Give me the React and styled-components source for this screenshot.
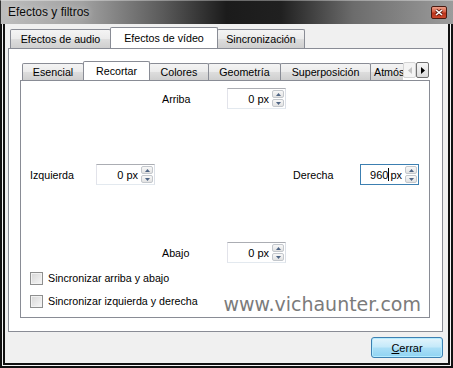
import React from 'react';
import styled, { createGlobalStyle } from 'styled-components';

const GlobalStyle = createGlobalStyle`
  html, body {
    margin: 0;
    padding: 0;
    background: #000;
  }
  body {
    font-family: "Liberation Sans", Arial, sans-serif;
    font-size: 10.7px;
    color: #000;
    overflow: hidden;
  }
`;

const Window = styled.div`
  width: 453px;
  height: 368px;
  display: flex;
  flex-direction: column;
  background: #111;
`;

const TitleBar = styled.div`
  height: 24px;
  flex: none;
  display: flex;
  align-items: center;
  padding: 0 6px 0 8px;
  box-sizing: border-box;
  background: linear-gradient(90deg, #bdbdbd 0%, #a2a2a2 18%, #5a5a5a 36%, #1b1b1b 50%, #202020 62%, #6c6c6c 78%, #9c9c9c 100%);
  box-shadow: inset 0 1px 0 rgba(255, 255, 255, 0.35), inset 1px 0 0 #333;
`;

const Title = styled.span`
  font-size: 12px;
  color: #0a0a0a;
  text-shadow: 0 0 6px rgba(255, 255, 255, 0.6);
`;

const CloseButton = styled.div`
  margin-left: auto;
  width: 16px;
  height: 13px;
  box-sizing: border-box;
  border: 1px solid #4a1a10;
  border-radius: 2px;
  background: linear-gradient(#eba08b, #d65c40 45%, #b8321a 55%, #cc4a2e);
  display: flex;
  align-items: center;
  justify-content: center;
`;

const Frame = styled.div`
  flex: 1;
  min-height: 0;
  display: flex;
  border: 2px solid #111;
  border-top: 0;
  background: #f4f4f4;
  padding: 0 1px 1px;
`;

const Client = styled.div`
  flex: 1;
  min-width: 0;
  display: flex;
  flex-direction: column;
  background: #f0f0f0;
  border: 2px solid #111;
  border-top: 0;
  padding: 2px 5px 5px 3px;
`;

const TabRow = styled.div`
  display: flex;
  align-items: flex-end;
  height: ${p => p.$h}px;
  margin: 0 1px 0 2px;
  flex: none;
  min-width: 0;
`;

const TabStrip = styled.div`
  flex: 1;
  min-width: 0;
  display: flex;
  align-items: flex-end;
  height: 100%;
  overflow: hidden;
`;

const Tab = styled.div`
  flex: none;
  width: ${p => p.$w}px;
  height: ${p => (p.$active ? p.$h + 3 : p.$h)}px;
  box-sizing: border-box;
  border: 1px solid #898c95;
  border-bottom: 0;
  margin-left: -1px;
  &:first-child { margin-left: 0; }
  border-radius: 2px 2px 0 0;
  display: flex;
  align-items: center;
  justify-content: ${p => (p.$clip ? 'flex-start' : 'center')};
  padding: 0 0 ${p => (p.$active ? 2 : 0)}px ${p => (p.$clip ? 3 : 0)}px;
  white-space: nowrap;
  background: ${p => (p.$active ? '#fff' : 'linear-gradient(#f4f4f4, #ebebeb 48%, #dddddd 52%, #cfcfcf)')};
  position: relative;
  z-index: ${p => (p.$active ? 2 : 0)};
  margin-bottom: ${p => (p.$active ? -1 : 0)}px;
`;

const Pane = styled.div`
  flex: 1;
  min-width: 0;
  min-height: 0;
  display: flex;
  flex-direction: column;
  background: #fff;
  border: 1px solid #898c95;
  padding: ${p => p.$pad};
`;

const ScrollButtons = styled.div`
  flex: none;
  display: flex;
  align-self: flex-end;
  margin-bottom: 2px;
`;

const ScrollArrow = styled.div`
  width: 13px;
  height: 16px;
  box-sizing: border-box;
  border: 1px solid ${p => (p.$disabled ? '#d4d4d4' : '#707070')};
  border-radius: 2px;
  background: ${p => (p.$disabled ? '#f4f4f4' : 'linear-gradient(#f6f6f6, #dcdcdc)')};
  display: flex;
  align-items: center;
  justify-content: center;
`;

const FieldRow = styled.div`
  display: flex;
  align-items: center;
  height: 21px;
  margin-top: ${p => p.$mt}px;
  padding: 0 10px 0 ${p => p.$pl}px;
  justify-content: ${p => (p.$spread ? 'space-between' : 'flex-start')};
`;

const FieldGroup = styled.div`
  display: flex;
  align-items: center;
`;

const Label = styled.span`
  width: ${p => p.$w}px;
`;

const SpinBox = styled.div`
  display: flex;
  width: 59px;
  height: 21px;
  box-sizing: border-box;
  border: 1px solid;
  border-color: ${p => (p.$focus ? '#3c7fb1' : '#abadb3 #dbdfe6 #e3e9ef #e2e3ea')};
  background: #fff;
  padding: 1px;
`;

const SpinText = styled.div`
  flex: 1;
  display: flex;
  align-items: center;
  justify-content: flex-end;
  padding-right: 3px;
  font-size: 11px;
`;

const Caret = styled.span`
  display: inline-block;
  width: 1px;
  height: 13px;
  background: #000;
  margin: 0 1px 0 0;
`;

const SpinButtons = styled.div`
  width: 12px;
  display: flex;
  flex-direction: column;
  gap: 1px;
`;

const SpinArrow = styled.div`
  flex: 1;
  box-sizing: border-box;
  border: 1px solid #c3c7cc;
  border-radius: 2px;
  background: linear-gradient(#f8f8f8, #e2e2e2);
  display: flex;
  align-items: center;
  justify-content: center;
`;

const CheckRow = styled.div`
  display: flex;
  align-items: center;
  height: 16px;
  margin-top: ${p => p.$mt}px;
  padding-left: 9px;
  white-space: nowrap;
`;

const CheckBox = styled.span`
  flex: none;
  width: 13px;
  height: 13px;
  box-sizing: border-box;
  border: 1px solid #8e8f8f;
  background: linear-gradient(135deg, #d6d6d6, #f7f7f7);
  box-shadow: inset 0 0 0 1px #f2f2f2;
  margin-right: 5px;
`;

const Watermark = styled.span`
  margin-left: auto;
  margin-right: 8px;
  margin-top: 6px;
  font-family: "DejaVu Sans", Verdana, sans-serif;
  font-size: 19px;
  line-height: 19px;
  color: #7b7b7b;
`;

const Footer = styled.div`
  display: flex;
  justify-content: flex-end;
  padding-top: 5px;
  flex: none;
`;

const Button = styled.button`
  width: 72px;
  height: 21px;
  box-sizing: border-box;
  border: 1px solid #3c7fb1;
  border-radius: 3px;
  background: linear-gradient(#e3f4fc, #c6eafa 45%, #a9def6 55%, #8fd3f3);
  box-shadow: inset 0 0 0 1px #b5ecff;
  font-family: inherit;
  font-size: 11px;
  color: #000;
  padding: 0;
  u { text-decoration: underline; }
`;

const Up = ({ color = '#4e6484' }) => (
  <svg width="5" height="3" viewBox="0 0 5 3"><polygon points="0,3 2.5,0 5,3" fill={color} /></svg>
);

const Down = ({ color = '#4e6484' }) => (
  <svg width="5" height="3" viewBox="0 0 5 3"><polygon points="0,0 2.5,3 5,0" fill={color} /></svg>
);

const Spin = ({ children, focus }) => (
  <SpinBox $focus={focus}>
    <SpinText>{children}</SpinText>
    <SpinButtons>
      <SpinArrow><Up /></SpinArrow>
      <SpinArrow><Down /></SpinArrow>
    </SpinButtons>
  </SpinBox>
);

const outerTabs = [
  { label: 'Efectos de audio', w: 101 },
  { label: 'Efectos de vídeo', w: 108, active: true },
  { label: 'Sincronización', w: 88 },
];

const innerTabs = [
  { label: 'Esencial', w: 62 },
  { label: 'Recortar', w: 67, active: true },
  { label: 'Colores', w: 60 },
  { label: 'Geometría', w: 73 },
  { label: 'Superposición', w: 91 },
  { label: 'Atmósfera', w: 80, clip: true },
];

export default function App() {
  return (
    <>
      <GlobalStyle />
      <Window>
        <TitleBar>
          <Title>Efectos y filtros</Title>
          <CloseButton>
            <svg width="8" height="7" viewBox="0 0 8 7">
              <path d="M1 1 L7 6 M7 1 L1 6" stroke="#5a1a0e" strokeWidth="3" />
              <path d="M1 1 L7 6 M7 1 L1 6" stroke="#fff" strokeWidth="1.6" />
            </svg>
          </CloseButton>
        </TitleBar>
        <Frame>
          <Client>
            <TabRow $h={22}>
              <TabStrip>
                {outerTabs.map(t => (
                  <Tab key={t.label} $w={t.w} $h={19} $active={t.active}>{t.label}</Tab>
                ))}
              </TabStrip>
            </TabRow>
            <Pane $pad="10px 12px 13px 11px">
              <TabRow $h={21}>
                <TabStrip>
                  {innerTabs.map(t => (
                    <Tab key={t.label} $w={t.w} $h={17} $active={t.active} $clip={t.clip}>{t.label}</Tab>
                  ))}
                </TabStrip>
                <ScrollButtons>
                  <ScrollArrow $disabled>
                    <svg width="4" height="7" viewBox="0 0 4 7"><polygon points="4,0 0,3.5 4,7" fill="#c4c4c4" /></svg>
                  </ScrollArrow>
                  <ScrollArrow>
                    <svg width="4" height="7" viewBox="0 0 4 7"><polygon points="0,0 4,3.5 0,7" fill="#000" /></svg>
                  </ScrollArrow>
                </ScrollButtons>
              </TabRow>
              <Pane $pad="0">
                <FieldRow $mt={7} $pl={141}>
                  <Label $w={65}>Arriba</Label>
                  <Spin>0 px</Spin>
                </FieldRow>
                <FieldRow $mt={55} $pl={9} $spread>
                  <FieldGroup>
                    <Label $w={66}>Izquierda</Label>
                    <Spin>0 px</Spin>
                  </FieldGroup>
                  <FieldGroup>
                    <Label $w={67}>Derecha</Label>
                    <Spin focus>960<Caret />px</Spin>
                  </FieldGroup>
                </FieldRow>
                <FieldRow $mt={57} $pl={141}>
                  <Label $w={65}>Abajo</Label>
                  <Spin>0 px</Spin>
                </FieldRow>
                <CheckRow $mt={7}>
                  <CheckBox />
                  <span>Sincronizar arriba y abajo</span>
                </CheckRow>
                <CheckRow $mt={7}>
                  <CheckBox />
                  <span>Sincronizar izquierda y derecha</span>
                  <Watermark>www.vichaunter.com</Watermark>
                </CheckRow>
              </Pane>
            </Pane>
            <Footer>
              <Button><u>C</u>errar</Button>
            </Footer>
          </Client>
        </Frame>
      </Window>
    </>
  );
}
